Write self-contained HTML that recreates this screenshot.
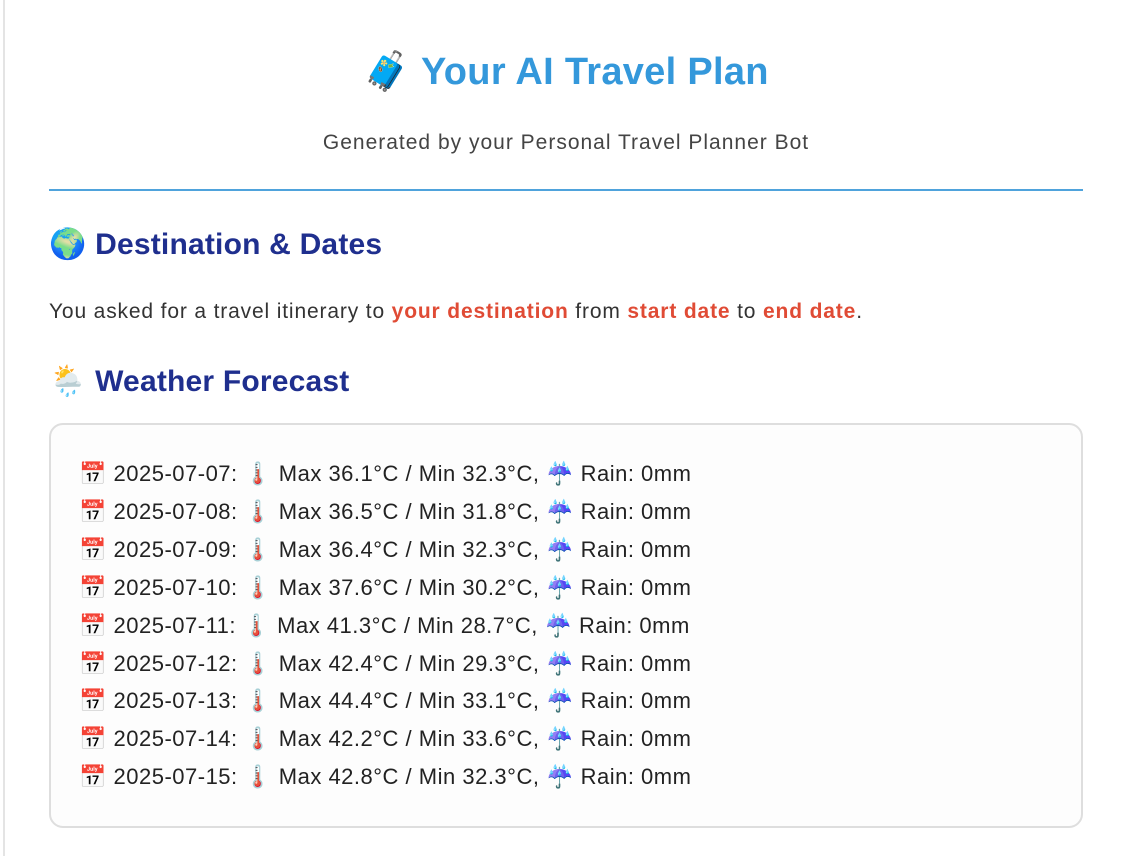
<!DOCTYPE html>
<html><head><meta charset="utf-8">
<style>
html,body{margin:0;padding:0;background:#fff;width:1125px;height:856px;overflow:hidden;}
body{font-family:"Liberation Sans","Noto Color Emoji",sans-serif;}
.edge{position:absolute;left:3px;top:0;width:2px;height:856px;background:#e4e4e4;}
.wrap{position:absolute;left:49px;width:1034px;top:0;}
h1{position:absolute;top:48px;left:0;width:1034px;margin:0;text-align:center;font-size:38px;font-weight:bold;color:#3498db;line-height:48px;letter-spacing:0.3px;}
.sub{position:absolute;top:130px;left:0;width:1034px;text-align:center;font-size:21px;color:#444;line-height:26px;letter-spacing:1px;}
.hr{position:absolute;top:189px;left:0;width:1034px;height:2px;background:#4fa3dc;}
h2{position:absolute;left:0;margin:0;font-size:30px;font-weight:bold;color:#1f2f8e;line-height:38px;letter-spacing:0.2px;}
.p{position:absolute;top:298px;left:0;font-size:21px;color:#333;line-height:28px;letter-spacing:0.85px;}
.p b{color:#e04b35;}
.box{position:absolute;top:423px;left:0;width:1030px;height:401px;border:2px solid #dedede;border-radius:14px;background:#fdfdfd;}
.lines{position:absolute;top:30px;left:28px;font-size:22px;color:#222;line-height:37.9px;letter-spacing:0.5px;}
</style></head><body>
<div class="edge"></div>
<div class="wrap">
<h1>🧳 Your AI Travel Plan</h1>
<div class="sub">Generated by your Personal Travel Planner Bot</div>
<div class="hr"></div>
<h2 style="top:226px">🌍 Destination &amp; Dates</h2>
<div class="p">You asked for a travel itinerary to <b>your destination</b> from <b>start date</b> to <b>end date</b>.</div>
<h2 style="top:363px">🌦️ Weather Forecast</h2>
<div class="box"><div class="lines">
📅 2025-07-07: 🌡️ Max 36.1°C / Min 32.3°C, ☔ Rain: 0mm<br>
📅 2025-07-08: 🌡️ Max 36.5°C / Min 31.8°C, ☔ Rain: 0mm<br>
📅 2025-07-09: 🌡️ Max 36.4°C / Min 32.3°C, ☔ Rain: 0mm<br>
📅 2025-07-10: 🌡️ Max 37.6°C / Min 30.2°C, ☔ Rain: 0mm<br>
📅 2025-07-11: 🌡️ Max 41.3°C / Min 28.7°C, ☔ Rain: 0mm<br>
📅 2025-07-12: 🌡️ Max 42.4°C / Min 29.3°C, ☔ Rain: 0mm<br>
📅 2025-07-13: 🌡️ Max 44.4°C / Min 33.1°C, ☔ Rain: 0mm<br>
📅 2025-07-14: 🌡️ Max 42.2°C / Min 33.6°C, ☔ Rain: 0mm<br>
📅 2025-07-15: 🌡️ Max 42.8°C / Min 32.3°C, ☔ Rain: 0mm
</div></div>
</div>
</body></html>
